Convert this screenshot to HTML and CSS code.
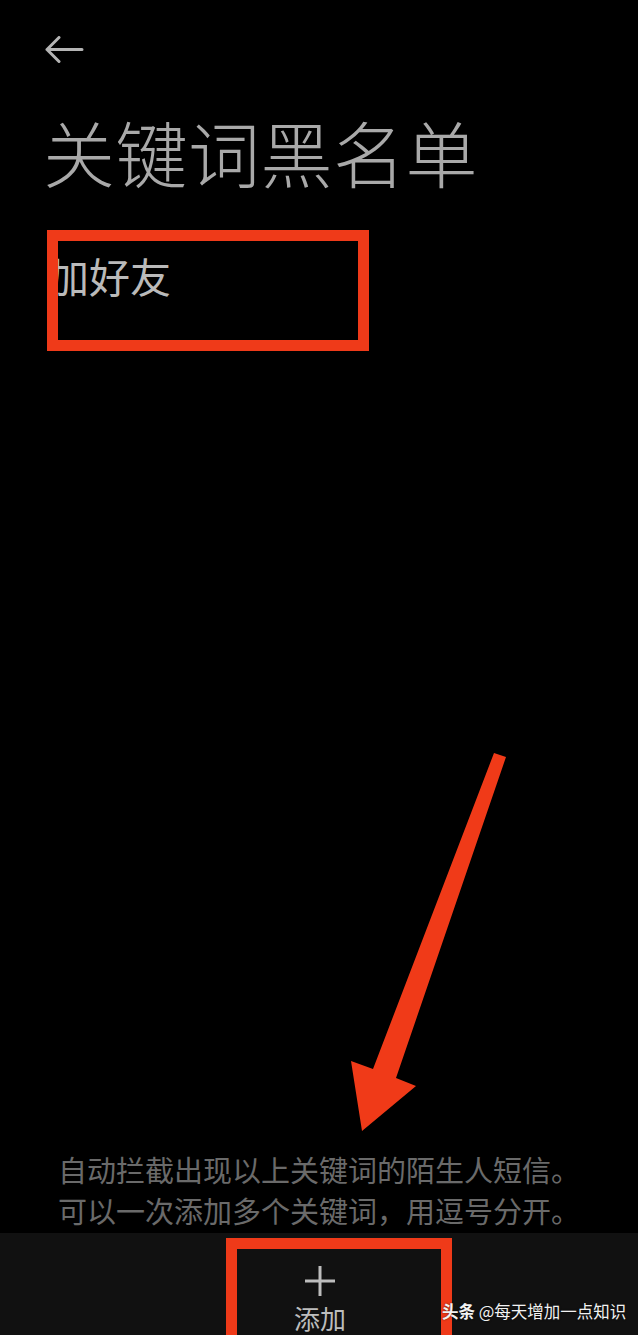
FILE: index.html
```html
<!DOCTYPE html>
<html lang="zh-CN">
<head>
<meta charset="utf-8">
<title>关键词黑名单</title>
<link rel="stylesheet" href="styles.css">
</head>
<body>
<div class="screen">
  <header class="header">
    <svg class="back" width="40" height="28" viewBox="0 0 40 28" aria-label="返回">
      <path d="M14 1.5 L2 13.5 L14 25.5 M2 13.5 H37" fill="none" stroke="#b4b4b4" stroke-width="3" stroke-linecap="round" stroke-linejoin="round"/>
    </svg>
  </header>

  <h1 class="title">关键词黑名单</h1>

  <ul class="keywords">
    <li class="keyword">加好友</li>
  </ul>

  <div class="spacer"></div>

  <p class="hint">自动拦截出现以上关键词的陌生人短信。<br>可以一次添加多个关键词，用逗号分开。</p>

  <footer class="actionbar">
    <button class="add-btn" type="button">
      <svg class="plus" width="32" height="32" viewBox="0 0 32 32">
        <path d="M16 1 V31 M1 16 H31" stroke="#bdbdbd" stroke-width="3" fill="none"/>
      </svg>
      <span class="add-label">添加</span>
    </button>
  </footer>

  <!-- callouts drawn on top of the screen -->
  <div class="mark mark-keyword"></div>
  <div class="mark mark-add"></div>
  <svg class="pointer" width="638" height="1335" viewBox="0 0 638 1335">
    <polygon points="494,753 506,757 396,1078 416,1086 362,1131 351,1061 373,1069" fill="#f03a18"/>
  </svg>
  <div class="watermark"><b>头条</b> @每天增加一点知识</div>
</div>
</body>
</html>
```

FILE: styles.css
```css
* {
  box-sizing: border-box;
}

html, body {
  margin: 0;
  padding: 0;
  background: #000;
}

body {
  font-family: "Noto Sans CJK SC", "Noto Sans", sans-serif;
  color: #b5b5b5;
}

.screen {
  position: relative;
  width: 638px;
  height: 1335px;
  overflow: hidden;
  display: flex;
  flex-direction: column;
  background: #000;
}

.header {
  height: 100px;
  padding: 36px 0 0 45px;
}

.back {
  display: block;
}

.title {
  margin: 6px 0 0 43px;
  font-size: 72px;
  line-height: 90px;
  font-weight: 300;
  color: #a9a9a9;
  letter-spacing: 0.5px;
}

.keywords {
  list-style: none;
  margin: 51px 0 0 0;
  padding: 0 0 0 48px;
}

.keyword {
  font-size: 41px;
  line-height: 56px;
  font-weight: 400;
  color: #bababa;
}

.spacer {
  flex: 1;
}

.hint {
  margin: 0 0 2px 0;
  text-align: center;
  font-size: 29px;
  line-height: 41px;
  color: #6a6a6a;
}

.actionbar {
  height: 102px;
  background: #111;
  display: flex;
  justify-content: center;
}

.add-btn {
  border: 0;
  background: transparent;
  padding: 32px 0 0 0;
  margin-left: 2px;
  display: flex;
  flex-direction: column;
  align-items: center;
  font-family: inherit;
  cursor: pointer;
}

.plus {
  display: block;
}

.add-label {
  margin-top: 4px;
  font-size: 26px;
  line-height: 34px;
  color: #bdbdbd;
}

.mark {
  position: absolute;
  border: 11px solid #ef3a19;
}

.mark-keyword {
  left: 47px;
  top: 230px;
  width: 322px;
  height: 121px;
}

.mark-add {
  left: 226px;
  top: 1238px;
  width: 226px;
  height: 140px;
}

.pointer {
  position: absolute;
  left: 0;
  top: 0;
  pointer-events: none;
}

.watermark {
  position: absolute;
  left: 442px;
  top: 1299px;
  font-size: 16.5px;
  line-height: 24px;
  color: #f2f2f2;
  white-space: nowrap;
  text-shadow: 0 0 2px rgba(0, 0, 0, 0.6);
}

.watermark b {
  font-weight: 700;
}
```
